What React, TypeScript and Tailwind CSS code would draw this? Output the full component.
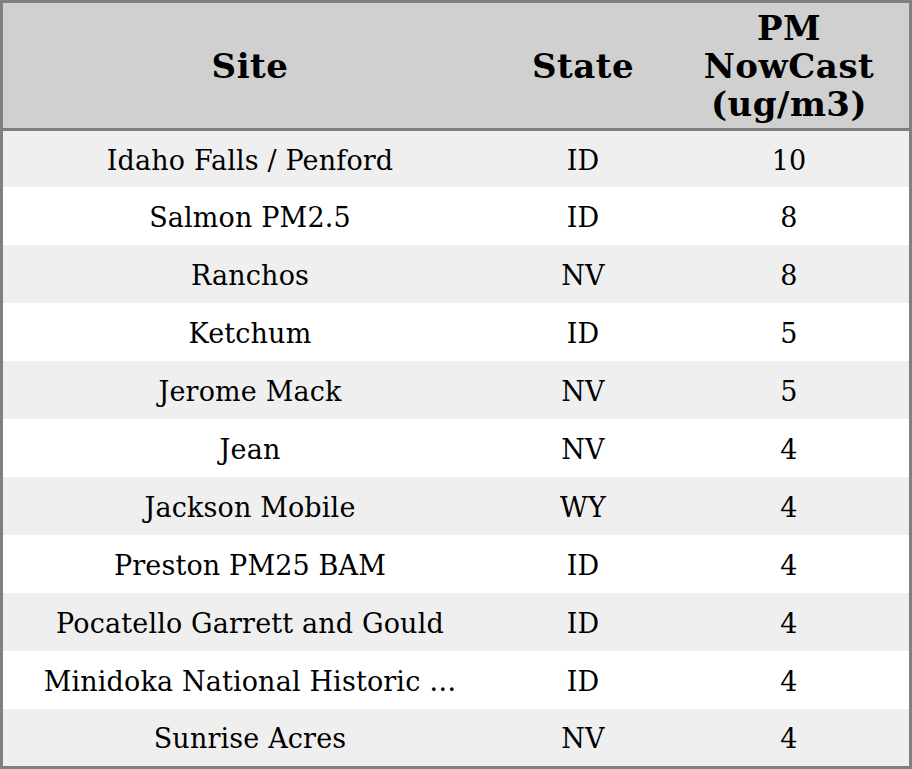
const rows: [string, string, string][] = [
  ["Idaho Falls / Penford", "ID", "10"],
  ["Salmon PM2.5", "ID", "8"],
  ["Ranchos", "NV", "8"],
  ["Ketchum", "ID", "5"],
  ["Jerome Mack", "NV", "5"],
  ["Jean", "NV", "4"],
  ["Jackson Mobile", "WY", "4"],
  ["Preston PM25 BAM", "ID", "4"],
  ["Pocatello Garrett and Gould", "ID", "4"],
  ["Minidoka National Historic \u2026", "ID", "4"],
  ["Sunrise Acres", "NV", "4"],
];

// first row sits under the header rule, last one above the bottom rule
const rowHeight = (i: number) =>
  i === 0 ? "h-[56px]" : i === rows.length - 1 ? "h-[57px]" : "h-[58px]";

const App = () => {
  return (
    <div
      className="w-[912px] h-[769px] border-[3px] border-[#808080] bg-white text-black"
      style={{ fontFamily: '"DejaVu Serif", "Liberation Serif", serif' }}
    >
      {/* Header */}
      <div className="grid grid-cols-[494px_172px_1fr] h-[125px] bg-[#d0d0d0] text-[34px] font-bold leading-[38px] tracking-[0.5px] text-center">
        <div className="flex items-center justify-center">Site</div>
        <div className="flex items-center justify-center">State</div>
        <div className="flex items-center justify-center">
          PM
          <br />
          NowCast
          <br />
          (ug/m3)
        </div>
      </div>
      <div className="h-[3px] bg-[#808080]" />

      {/* Body */}
      {rows.map(([site, state, value], i) => (
        <div
          key={site}
          className={`grid grid-cols-[494px_172px_1fr] items-center pt-[3px] text-center text-[27px] leading-[32px] tracking-[0.15px] ${rowHeight(i)} ${
            i % 2 === 0 ? "bg-[#efefef]" : "bg-white"
          }`}
        >
          <div className="whitespace-nowrap">{site}</div>
          <div>{state}</div>
          <div>{value}</div>
        </div>
      ))}
    </div>
  );
};

export default App;
